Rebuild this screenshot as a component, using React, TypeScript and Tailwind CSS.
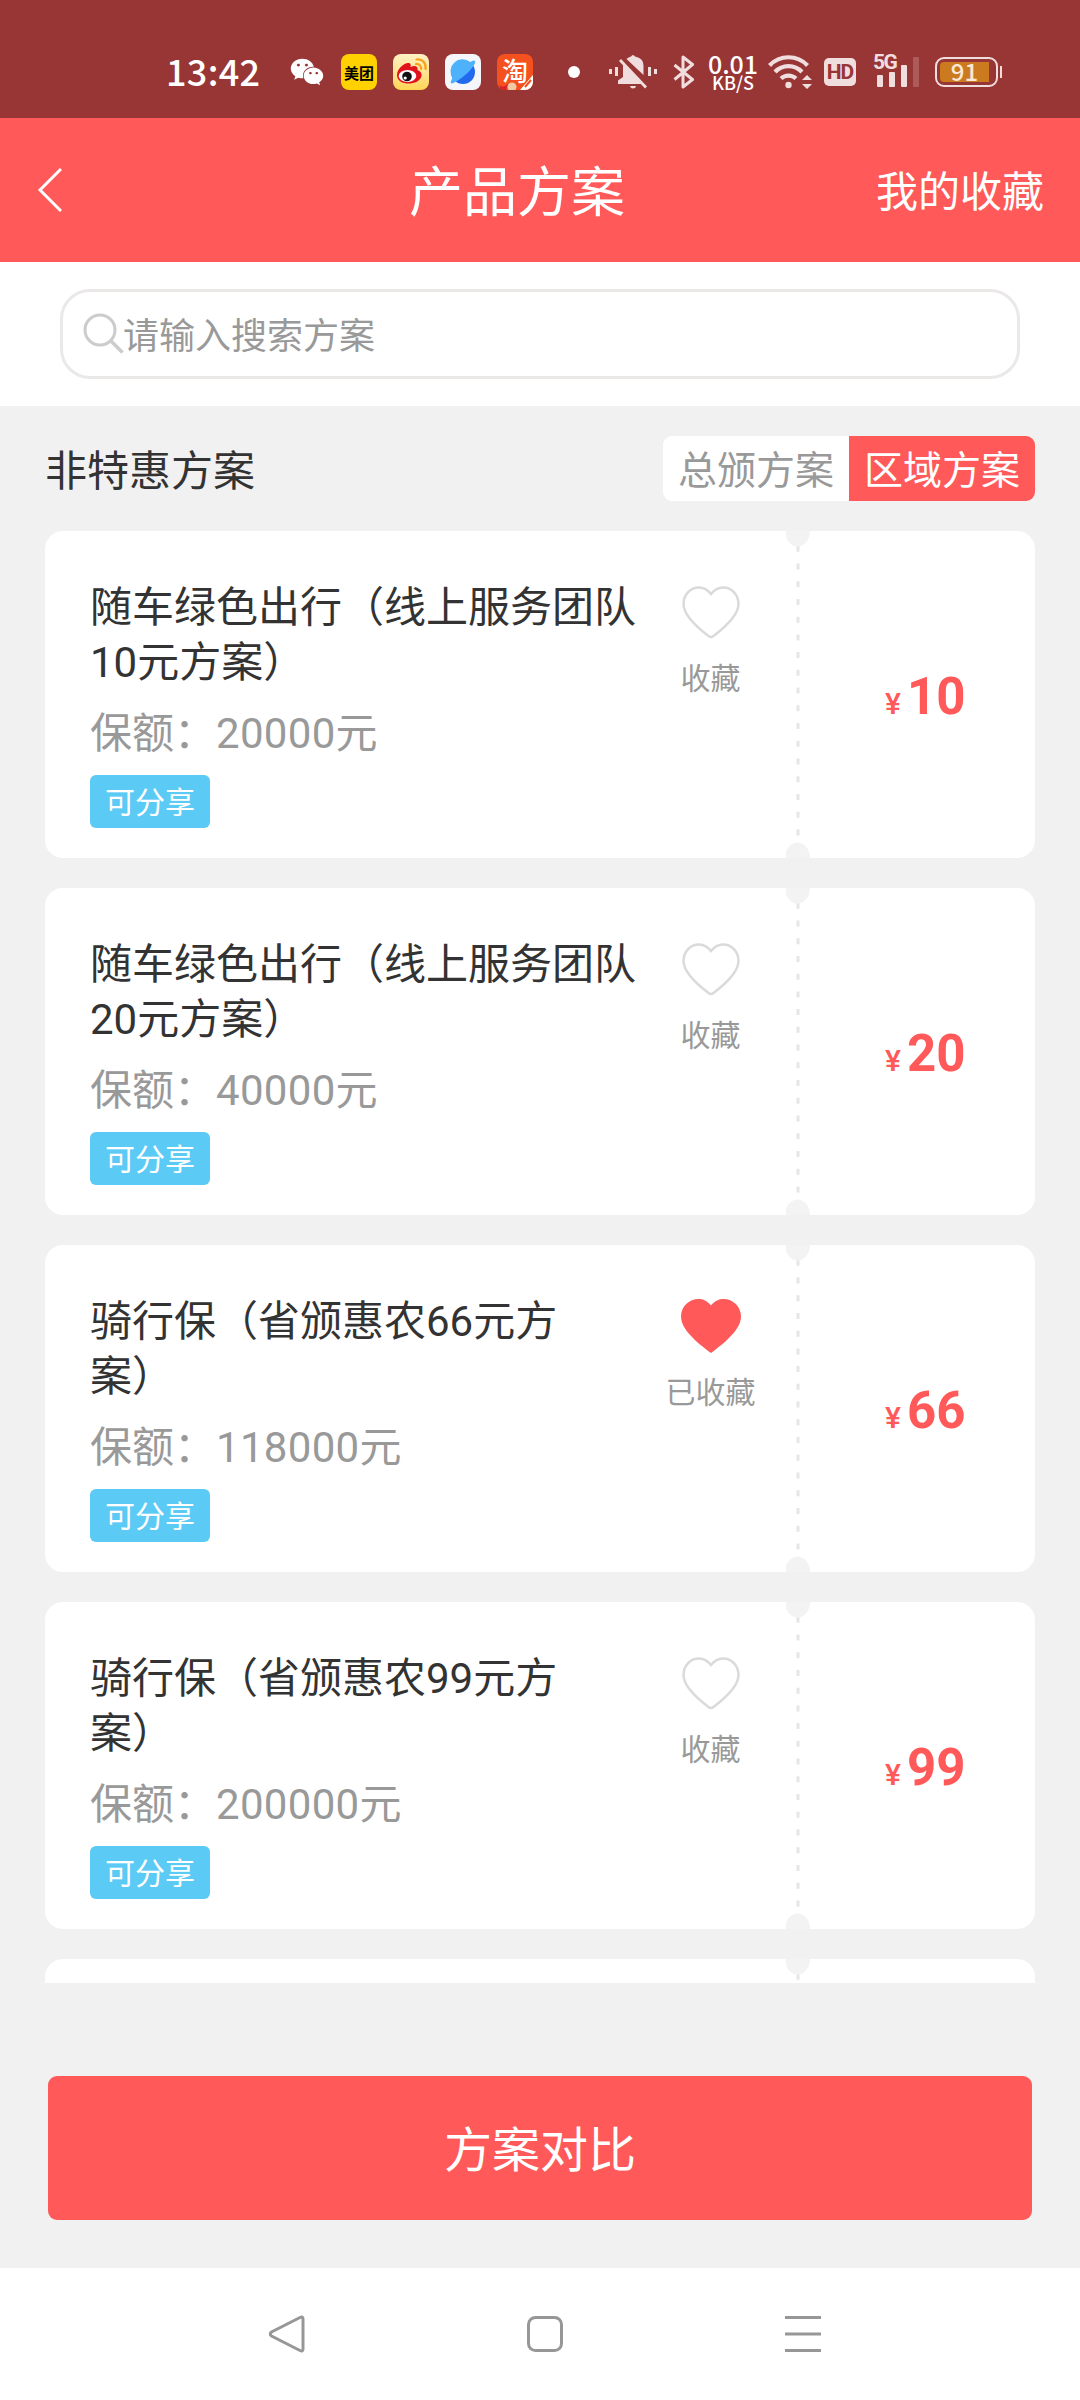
import { FaWeixin } from 'react-icons/fa';

type Plan = {
  id: number;
  title: string;
  amount: string;
  price: number;
  collected: boolean;
};

const PLANS: Plan[] = [
  { id: 1, title: '随车绿色出行（线上服务团队10元方案）', amount: '20000元',  price: 10, collected: false },
  { id: 2, title: '随车绿色出行（线上服务团队20元方案）', amount: '40000元',  price: 20, collected: false },
  { id: 3, title: '骑行保（省颁惠农66元方案）',           amount: '118000元', price: 66, collected: true },
  { id: 4, title: '骑行保（省颁惠农99元方案）',           amount: '200000元', price: 99, collected: false },
];

function StatusBar() {
  return (
    <div className="flex h-[118px] items-center bg-[#983535] pt-[26px] pl-[166px] text-white">
      <span className="w-[124px] pb-1 font-['Noto_Sans_CJK_SC',sans-serif] text-[36px] leading-9 font-medium tracking-[0.3px]">13:42</span>
      <FaWeixin className="size-[34px] shrink-0" />
      <span className="ml-[17px] flex size-9 shrink-0 items-center justify-center rounded-[8px] bg-[#ffd100] font-['Noto_Sans_CJK_SC',sans-serif] text-[15px] leading-none font-bold text-black">
        美团
      </span>
      <span className="ml-4 flex size-9 shrink-0 items-center justify-center rounded-[8px] bg-linear-to-b from-[#fff1c4] to-[#ffd552]">
        <svg viewBox="0 0 36 36" className="size-9">
          <path d="M4 21c0-6 7-12 11-12 3 0 3 2 2.500 4 4-2 8-1 7 3 3 1 4.500 3 4 6-1 5-7 7.500-13 7.500S4 27 4 21Z" fill="#e0131d" />
          <ellipse cx="14.500" cy="22" rx="8.800" ry="6" fill="#fff" />
          <circle cx="14" cy="22.500" r="4.800" fill="#111" />
          <circle cx="12.200" cy="24" r="1.600" fill="#fff" />
          <path d="M23 10c3-.5 5.500 2 5 5M23.500 5.500c6-1 10 4 9 9.500" fill="none" stroke="#f9a11b" strokeWidth="2.200" strokeLinecap="round" />
        </svg>
      </span>
      <span className="ml-4 flex size-9 shrink-0 items-center justify-center rounded-[8px] bg-[#f5f6fa]">
        <svg viewBox="0 0 36 36" className="size-9">
          <circle cx="18" cy="18" r="12" fill="#2169ee" />
          <path d="M7.500 24A12 12 0 0 1 25 8c4-2.500 6-2 5 1-1.500 5-11 14-18 18-6 4-8 3-4.500-3Z" fill="#4db1fb" />
        </svg>
      </span>
      <span className="relative ml-4 flex size-9 shrink-0 items-center justify-center rounded-[8px] bg-[#f4511e] pb-[5px] font-['Noto_Sans_CJK_SC',sans-serif] text-[26px] leading-none font-medium">
        淘
        <svg viewBox="0 0 36 36" className="absolute inset-0 rounded-[8px]">
          <path d="M36 21v15H23Z" fill="#fff" />
          <circle cx="15" cy="33" r="4.500" fill="#f3c9a5" />
          <path d="M2 31q4 4 9-1l-2 6H4Z" fill="#d8202f" />
          <path d="m28 33 6-7" stroke="#f4511e" strokeWidth="2" />
        </svg>
      </span>
      <span className="ml-[35px] size-3 shrink-0 rounded-full bg-white" />

      <svg viewBox="0 0 48 34" className="ml-[29px] h-[34px] w-12 shrink-0 fill-[#f0dede]">
        <path d="M0 14h3v5H0zM6 12h3v9H6zM39 12h3v9h-3zM45 14h3v5h-3zM21 31h6q-.5 2.500-3 2.500T21 31Z" />
        <path d="M17.500 4q2-2 4.500-2.500 2-3 4 0 8.500 1.500 8.500 9V20ZM14 9.500 32.500 29H9v-3.500l5-3.500Z" />
        <path d="m11 5 26 27.500" stroke="#f0dede" strokeWidth="2.800" />
      </svg>
      <svg viewBox="0 0 22 34" className="ml-4 h-[34px] w-[22px] shrink-0 fill-none stroke-[#f0dede] stroke-3">
        <path d="m1.500 10 18 14.500L10 32V2l9.500 7.500-18 15" strokeLinejoin="round" />
      </svg>
      <div className="ml-[14px] flex w-[48px] shrink-0 flex-col items-center font-['Noto_Sans_CJK_SC',sans-serif] font-medium">
        <span className="text-[25px] leading-[20px]">0.01</span>
        <span className="text-[18px] leading-[18px]">KB/S</span>
      </div>
      <svg viewBox="0 0 44 34" className="ml-[11px] h-[34px] w-11 shrink-0 fill-none stroke-[#f0dede]">
        <path d="M1.500 10.500a26 26 0 0 1 38 0M7 17a18.500 18.500 0 0 1 27 0M13 23.500a11 11 0 0 1 15 0" strokeWidth="4.200" />
        <circle cx="20.500" cy="30" r="3.200" className="fill-[#f0dede] stroke-none" />
        <path d="m39 20 5 5H34ZM39 34l5-5H34Z" className="fill-[#f0dede] stroke-none" />
      </svg>
      <span className="ml-3 flex h-7 w-8 shrink-0 items-center justify-center rounded-[5px] bg-[#f0dede] font-['Roboto',sans-serif] text-[21px] leading-none font-bold tracking-[-1px] text-[#983535]">
        HD
      </span>
      <div className="relative ml-[17px] h-[34px] w-[46px] shrink-0">
        <span className="absolute top-[-5px] left-0 font-['Roboto',sans-serif] text-[21px] leading-6 font-bold tracking-[-1.5px] text-[#f0dede]">5G</span>
        <div className="flex h-[32px] items-end gap-[6px] pl-1">
          <i className="h-3 w-[6px] rounded-[1px] bg-[#f0dede]" />
          <i className="h-[15px] w-[6px] rounded-[1px] bg-[#f0dede]" />
          <i className="h-[22px] w-[6px] rounded-[1px] bg-[#f0dede]" />
          <i className="h-[30px] w-[6px] rounded-[1px] bg-[#ac5a5a]" />
        </div>
      </div>
      <div className="ml-4 flex h-[30px] w-[63px] shrink-0 rounded-[9px] border-2 border-[#f0dede] p-[3px]">
        <span className="flex w-[49px] items-center justify-center rounded-l-[4px] bg-[#cc7a20] pb-[2px] font-['Noto_Sans_CJK_SC',sans-serif] text-[24px] leading-none font-medium text-[#fbe9d5]">
          91
        </span>
      </div>
      <i className="ml-[2px] h-3 w-[2px] bg-[#f0dede]" />
    </div>
  );
}

function Heart({ filled }: { filled: boolean }) {
  if (filled) {
    return (
      <svg viewBox="0 0 60 56" className="h-14 w-[60px] fill-[#ff5959]">
        <path d="M30 7.500C26 2.500 22 1 17.500 1 8 1 0 8.500 0 18.500 0 31 15 44 30 55 45 44 60 31 60 18.500 60 8.500 52 1 42.500 1 38 1 34 2.500 30 7.500Z" />
      </svg>
    );
  }
  return (
    <svg viewBox="0 0 60 56" className="h-14 w-[60px] fill-none stroke-[#dadada] stroke-[2.5]">
      <path d="M30 10C26.500 5.500 22 3.500 18 3.500 9 3.500 2.500 11 2.500 20 2.500 31 15 42.500 27.500 52q2.500 2 5 0C45 42.500 57.500 31 57.500 20 57.500 11 51 3.500 42 3.500 38 3.500 33.500 5.500 30 10Z" />
    </svg>
  );
}

// perforated line between the plan info and the price
function TicketDivider() {
  return (
    <svg viewBox="0 0 24 327" className="h-[327px] w-6 shrink-0">
      <path d="M12 14V313" stroke="#e6e6e6" strokeWidth="3" strokeDasharray="6 11.730" strokeDashoffset="17" />
      <ellipse cx="11.500" cy="0" rx="12.500" ry="15.500" fill="#f3f3f3" />
      <ellipse cx="11.500" cy="327" rx="12.500" ry="15.500" fill="#f3f3f3" />
    </svg>
  );
}

function PlanCard({ plan }: { plan: Plan }) {
  return (
    <div className="flex h-[327px] shrink-0 rounded-[18px] bg-white">
      <div className="w-[593px] shrink-0 pt-[49px] pl-[45px]">
        <p className="text-[42px] leading-[55px] text-[#333] [text-spacing-trim:space-all]">{plan.title}</p>
        <p className="mt-[14px] text-[42px] leading-[60px] text-[#999] [text-spacing-trim:space-all]">
          保额：<span className="tracking-[0.3px]">{plan.amount}</span>
        </p>
        <span className="mt-[11px] flex h-[53px] w-[120px] items-center justify-center rounded-[6px] bg-[#5bcaf5] pt-px text-[30px] text-white">
          可分享
        </span>
      </div>
      <div className="flex w-[148px] shrink-0 flex-col items-center pt-[53px] pr-[3px]">
        <Heart filled={plan.collected} />
        <span className="mt-[17px] text-[30px] leading-[44px] whitespace-nowrap text-[#999]">{plan.collected ? '已收藏' : '收藏'}</span>
      </div>
      <TicketDivider />
      <div className="flex flex-1 items-baseline pt-[136px] pl-[75px] font-bold text-[#ff5959]">
        <span className="w-[22px] text-[30px] font-medium">¥</span>
        <span className="text-[51px] leading-[60px]">{plan.price}</span>
      </div>
    </div>
  );
}

export default function App() {
  return (
    <div className="flex h-[2400px] w-[1080px] flex-col bg-[#f1f1f1] font-['Roboto','Noto_Sans_CJK_SC',sans-serif]">
      <StatusBar />

      <header className="grid h-36 grid-cols-3 items-center bg-[#ff5959] px-9 text-white">
        <svg viewBox="0 0 26 44" className="h-11 w-[26px] fill-none stroke-white stroke-3">
          <path d="M25 1 4 22 25 43" />
        </svg>
        <h1 className="pt-[6px] pr-[46px] text-center text-[54px]">产品方案</h1>
        <span className="pt-[4px] text-right text-[42px]">我的收藏</span>
      </header>

      <div className="flex h-36 items-center bg-white px-[60px]">
        <div className="flex h-[90px] w-full items-center rounded-[30px] border-3 border-[#ebe8e8] pl-5">
          <svg viewBox="0 0 42 42" className="size-[42px] fill-none stroke-[#ccc]">
            <circle cx="17" cy="17" r="15" strokeWidth="3" />
            <path d="m28 28 11.500 11.500" strokeWidth="3.500" />
          </svg>
          <span className="-ml-[2px] pt-[5px] text-[36px] text-[#999]">请输入搜索方案</span>
        </div>
      </div>

      <div className="mt-[30px] flex h-[65px] items-center justify-between px-[45px]">
        <h2 className="pt-[6px] text-[42px] text-[#333]">非特惠方案</h2>
        <div className="flex h-full overflow-hidden rounded-[9px] bg-white text-[39px]">
          <button className="w-[186px] pt-[5px] text-[#999]">总颁方案</button>
          <button className="w-[186px] bg-[#ff5959] pt-[5px] text-white">区域方案</button>
        </div>
      </div>

      <div className="mt-[30px] flex h-[1452px] shrink-0 flex-col gap-[30px] overflow-hidden px-[45px]">
        {PLANS.map(plan => <PlanCard key={plan.id} plan={plan} />)}
        <div className="flex h-[327px] shrink-0 rounded-[18px] bg-white pl-[741px]">
          <TicketDivider />
        </div>
      </div>

      <button className="mx-12 mt-[93px] h-36 shrink-0 rounded-[9px] bg-[#ff5959] pt-[5px] text-[48px] text-white">方案对比</button>

      <nav className="mt-auto flex h-[132px] shrink-0 items-center bg-white pl-[267px]">
        <svg viewBox="0 0 558 40" className="h-10 w-[558px] fill-none stroke-[#979797] stroke-3">
          <path d="M33 3.500 4.500 18q-2.500 2 0 4L33 36.500q3 1.500 3-1.500V5q0-3-3-1.500Z" />
          <rect x="261.500" y="3.500" width="33" height="33" rx="7" />
          <path d="M518 3.500h36M518 20h36M518 36.500h36" />
        </svg>
      </nav>
    </div>
  );
}
